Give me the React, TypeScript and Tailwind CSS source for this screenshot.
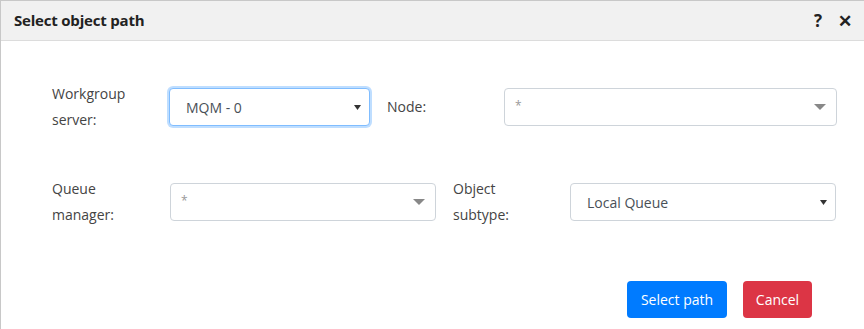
type Field = {
  label: [string, string?];
  value: string;
  placeholder?: boolean;
  focused?: boolean;
  labelW: string;
  selectW: string;
};

function Caret({ native }: { native?: boolean }) {
  if (native) {
    return (
      <svg width="7" height="5" viewBox="0 0 7 5" className="shrink-0">
        <path d="M0 0h7L3.5 5z" fill="#333" />
      </svg>
    );
  }
  return (
    <svg width="12" height="6" viewBox="0 0 12 6" className="shrink-0">
      <path d="M0 0h12L6 6z" fill="#888" />
    </svg>
  );
}

function SelectField({ f }: { f: Field }) {
  return (
    <>
      <div
        className={`${f.labelW} shrink-0 text-[14px] leading-[26px] text-[#444]`}
      >
        <div>{f.label[0]}</div>
        {f.label[1] && <div>{f.label[1]}</div>}
      </div>
      <div
        className={`${f.selectW} shrink-0 h-[38px] flex items-center justify-between rounded bg-white border ${
          f.focused
            ? "border-[#80bdff] shadow-[0_0_0_2px_rgba(0,123,255,0.25)]"
            : "border-[#ced4da]"
        } ${f.placeholder ? "pl-[10px] pr-[10px]" : "pl-[16px] pr-[8px]"}`}
      >
        {f.placeholder ? (
          <span className="self-start mt-[8px] text-[12px] text-[#999]">*</span>
        ) : (
          <span className="text-[14px] text-[#495057]">{f.value}</span>
        )}
        <Caret native={!f.placeholder} />
      </div>
    </>
  );
}

const row1: Field[] = [
  { label: ["Workgroup", "server:"], value: "MQM - 0", focused: true, labelW: "w-[117px]", selectW: "w-[201px]" },
  { label: ["Node:"], value: "*", placeholder: true, labelW: "w-[117px]", selectW: "w-[333px]" },
];

const row2: Field[] = [
  { label: ["Queue", "manager:"], value: "*", placeholder: true, labelW: "w-[118px]", selectW: "w-[266px]" },
  { label: ["Object", "subtype:"], value: "Local Queue", labelW: "w-[117px]", selectW: "w-[266px]" },
];

export default function App() {
  return (
    <div
      className="w-[864px] h-[329px] bg-white border-l border-t border-[#c8c8c8] flex flex-col overflow-hidden"
      style={{ fontFamily: '"Open Sans", "Noto Sans", sans-serif' }}
    >
      <div className="h-[40px] shrink-0 bg-[#f1f1f1] border-b border-[#dcdcdc] flex items-center pl-[13px] pr-[12px]">
        <h2 className="text-[15px] font-bold text-[#222] tracking-[-0.2px]">Select object path</h2>
        <div className="ml-auto flex items-center gap-[16px] text-[#222]">
          <span className="text-[17px] font-bold leading-none">?</span>
          <span className="text-[17px] font-bold leading-none">✕</span>
        </div>
      </div>
      <div className="flex flex-col pl-[51px] pt-[40px]">
        <div className="flex items-center gap-[17px] [&>div:nth-child(2)]:-ml-[17px] [&>div:nth-child(4)]:-ml-[17px]">
          {row1.map((f) => (
            <SelectField key={f.label[0]} f={f} />
          ))}
        </div>
        <div className="flex items-center gap-[17px] mt-[43px] [&>div:nth-child(2)]:-ml-[17px] [&>div:nth-child(4)]:-ml-[17px]">
          {row2.map((f) => (
            <SelectField key={f.label[0]} f={f} />
          ))}
        </div>
        <div className="flex justify-end gap-[16px] pr-[52px] mt-[53px]">
          <button
            type="button"
            className="h-[37px] w-[100px] rounded bg-[#007bff] text-white text-[14px]"
          >
            Select path
          </button>
          <button
            type="button"
            className="h-[37px] w-[69px] rounded bg-[#dc3545] text-white text-[14px]"
          >
            Cancel
          </button>
        </div>
      </div>
    </div>
  );
}
